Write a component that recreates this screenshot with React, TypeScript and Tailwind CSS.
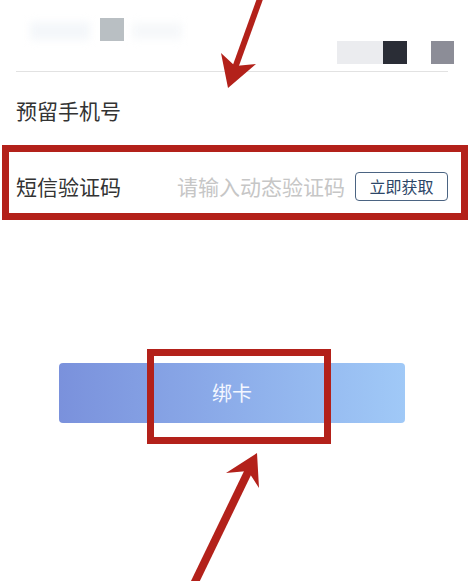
import React from "react";

export default function App() {
  return (
    <div
      className="relative w-[476px] h-[581px] overflow-hidden bg-white"
      style={{ fontFamily: '"Noto Sans CJK SC", "Noto Sans", sans-serif' }}
    >
      {/* top blurred area */}
      <div className="h-[71px] flex">
        <div className="pt-[18px] pl-[30px] flex items-start">
          <div className="w-[60px] h-[18px] mt-[4px] bg-[#f4f7fa] blur-[4px]" />
          <div className="ml-[10px] w-[24px] h-[23px] bg-[#b9bfc3] blur-[0.5px]" />
          <div className="ml-[8px] w-[50px] h-[16px] mt-[5px] bg-[#f6f8fa] blur-[4px]" />
        </div>
        <div className="ml-auto pt-[41px] pr-[22px] flex items-start">
          <div className="w-[46px] h-[23px] bg-[#ebecef] blur-[0.5px]" />
          <div className="w-[24px] h-[23px] bg-[#2a2d36] blur-[0.5px]" />
          <div className="ml-[24px] w-[23px] h-[23px] bg-[#8c8d97] blur-[0.5px]" />
        </div>
      </div>
      <div className="ml-4 mr-[28px] border-t border-[#e2e2e2]" />

      {/* rows */}
      <div className="h-[76px] flex items-center pl-4 pr-[28px]">
        <span className="text-[21px] text-[#333333] leading-none">预留手机号</span>
      </div>
      <div className="h-[76px] flex items-center pl-4 pr-[28px]">
        <span className="text-[21px] text-[#333333] leading-none">短信验证码</span>
        <span className="ml-auto text-[21px] text-[#c6c6c6] leading-none">请输入动态验证码</span>
        <div className="ml-[10px] w-[93px] h-[29px] flex items-center justify-center rounded-[4px] border border-[#4b6482] text-[16px] text-[#2c4668] leading-none">
          立即获取
        </div>
      </div>

      {/* bind button */}
      <div className="mt-[139px] ml-[59px] w-[346px] h-[60px] rounded-[4px] bg-linear-to-r from-[#7a91dc] to-[#a0c9f7] flex items-center justify-center">
        <span className="text-[20px] text-[#f4f7ff] leading-none">绑卡</span>
      </div>

      {/* annotations */}
      <div className="absolute left-[2px] top-[145px] w-[466px] h-[75px] border-[7px] border-[#b3211a]" />
      <div className="absolute left-[147px] top-[349px] w-[184px] h-[95px] border-[7px] border-[#b3211a]" />
      <svg className="absolute left-0 top-0" width="476" height="581" viewBox="0 0 476 581">
        <line x1="261" y1="-4" x2="235" y2="68" stroke="#b3211a" strokeWidth="6" />
        <polygon points="228,88 221,53 235,66 256,64" fill="#b3211a" />
        <line x1="249" y1="470" x2="193" y2="586" stroke="#b3211a" strokeWidth="8" />
        <polygon points="257,453 226,473 248,471 259,488" fill="#b3211a" />
      </svg>
    </div>
  );
}
